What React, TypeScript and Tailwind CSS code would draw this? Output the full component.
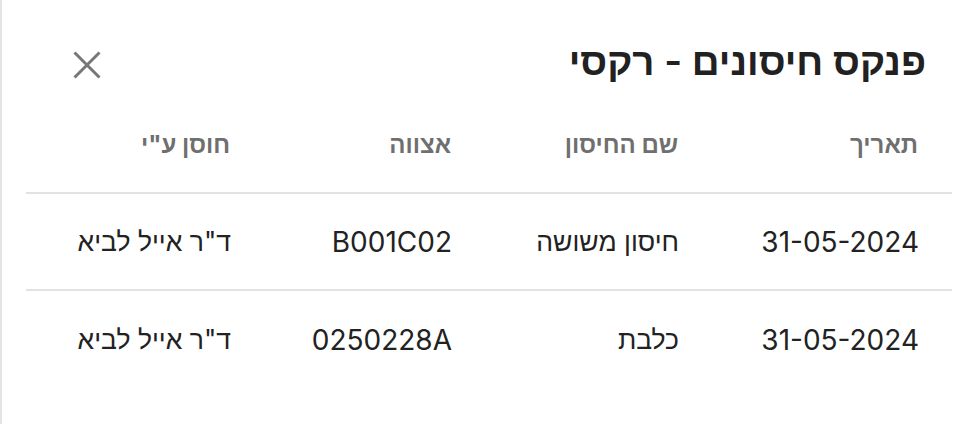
import React from "react";

const rows = [
  { date: "31-05-2024", name: "חיסון משושה", batch: "B001C02", by: 'ד"ר אייל לביא' },
  { date: "31-05-2024", name: "כלבת", batch: "0250228A", by: 'ד"ר אייל לביא' },
];

const cols = ["w-[240px]", "w-[227px]", "w-[221px]", "w-[236px]"];
const sizes = ["text-[28px]", "text-[26.5px]", "text-[28px]", "text-[26.5px]"];

export default function App() {
  return (
    <div
      dir="rtl"
      className="w-[972px] h-[424px] bg-white border-l-2 border-[#e4e4e4] text-[#222]"
      style={{ fontFamily: 'Inter, "Liberation Sans", "Noto Sans", sans-serif' }}
    >
      <div className="flex items-center justify-between h-[124px] pr-[46px] pl-[70px] pb-[2px]">
        <h2 className="text-[38.5px] font-semibold leading-none text-[#212121]">פנקס חיסונים - רקסי</h2>
        <button className="w-[30px] h-[30px] mt-[8px] flex items-center justify-center text-[#777]">
          <svg width="28" height="28" viewBox="0 0 28 28" fill="none" stroke="currentColor" strokeWidth="3">
            <path d="M1.5 1.5 26.5 26.5M26.5 1.5 1.5 26.5" />
          </svg>
        </button>
      </div>
      <div className="pr-[20px] pl-[24px]">
        <div className="flex h-[70px] items-start border-b-2 border-[#e2e2e2] text-[24px] font-bold text-[#6f6f6f]">
          {["תאריך", "שם החיסון", "אצווה", 'חוסן ע"י'].map((h, i) => (
            <div key={i} className={`${cols[i]} pr-[34px] leading-[28px] pt-[7px]`}>
              {h}
            </div>
          ))}
        </div>
        {rows.map((r, ri) => (
          <div
            key={ri}
            className={`flex h-[97px] items-center text-[#222] ${ri === 0 ? "border-b-2 border-[#e2e2e2]" : ""}`}
          >
            {[r.date, r.name, r.batch, r.by].map((c, i) => (
              <div key={i} className={`${cols[i]} ${sizes[i]} pr-[33px]`}>
                {c}
              </div>
            ))}
          </div>
        ))}
      </div>
    </div>
  );
}
